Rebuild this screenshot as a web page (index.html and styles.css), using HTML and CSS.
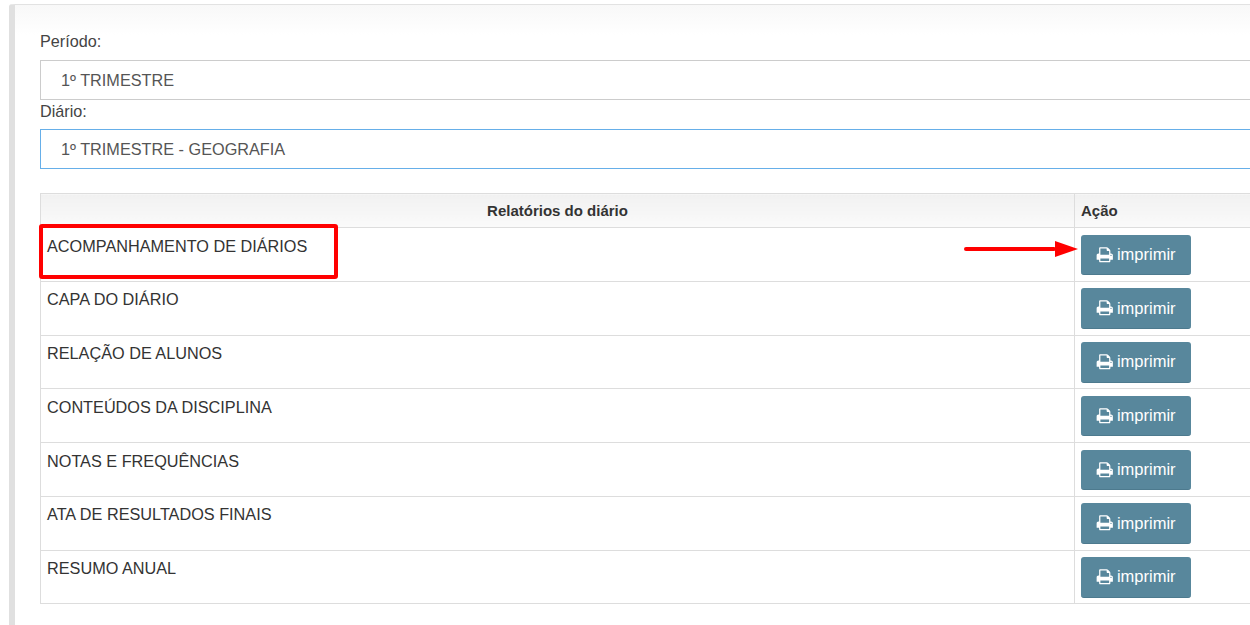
FILE: index.html
```html
<!DOCTYPE html>
<html lang="pt-BR">
<head>
<meta charset="utf-8">
<title>Relatórios do diário</title>
<link rel="stylesheet" href="styles.css">
</head>
<body>
<svg width="0" height="0" class="defs"><defs>
<symbol id="print" viewBox="0 0 1792 1792"><path fill="currentColor" d="M448 1536h896v-256h-896v256zm0-640h896v-384h-160q-40 0-68-28t-28-68v-160h-640v640zm1152 64q0-26-19-45t-45-19-45 19-19 45 19 45 45 19 45-19 19-45zm128 0v416q0 13-9.5 22.5t-22.5 9.5h-224v160q0 40-28 68t-68 28h-960q-40 0-68-28t-28-68v-160h-224q-13 0-22.5-9.5t-9.5-22.5v-416q0-79 56.5-135.5t135.5-56.5h64v-544q0-40 28-68t68-28h672q40 0 88 20t76 48l152 152q28 28 48 76t20 88v256h64q79 0 135.5 56.5t56.5 135.5z"/></symbol>
</defs></svg>
<main class="panel">
  <label class="label">Período:</label>
  <div class="field">1º TRIMESTRE</div>
  <label class="label label-second">Diário:</label>
  <div class="field field-focus">1º TRIMESTRE - GEOGRAFIA</div>
  <table class="report">
    <thead>
      <tr><th class="col-name">Relatórios do diário</th><th class="col-action">Ação</th></tr>
    </thead>
    <tbody>
      <tr><td>ACOMPANHAMENTO DE DIÁRIOS</td><td class="cell-action"><button class="btn"><svg class="ico"><use href="#print"/></svg>imprimir</button></td></tr>
      <tr><td>CAPA DO DIÁRIO</td><td class="cell-action"><button class="btn"><svg class="ico"><use href="#print"/></svg>imprimir</button></td></tr>
      <tr><td>RELAÇÃO DE ALUNOS</td><td class="cell-action"><button class="btn"><svg class="ico"><use href="#print"/></svg>imprimir</button></td></tr>
      <tr><td>CONTEÚDOS DA DISCIPLINA</td><td class="cell-action"><button class="btn"><svg class="ico"><use href="#print"/></svg>imprimir</button></td></tr>
      <tr><td>NOTAS E FREQUÊNCIAS</td><td class="cell-action"><button class="btn"><svg class="ico"><use href="#print"/></svg>imprimir</button></td></tr>
      <tr><td>ATA DE RESULTADOS FINAIS</td><td class="cell-action"><button class="btn"><svg class="ico"><use href="#print"/></svg>imprimir</button></td></tr>
      <tr><td>RESUMO ANUAL</td><td class="cell-action"><button class="btn"><svg class="ico"><use href="#print"/></svg>imprimir</button></td></tr>
    </tbody>
  </table>
</main>
<div class="mark-box"></div>
<svg class="mark-arrow" width="116" height="16" viewBox="0 0 116 16"><rect x="0" y="6" width="92" height="4" rx="2" fill="#f00"/><path d="M91 0 L114 8 L91 16 Z" fill="#f00"/></svg>
</body>
</html>
```
FILE: styles.css
```css
html, body {
  margin: 0;
  height: 100%;
  overflow: hidden;
  background: #fff;
}
body {
  position: relative;
  width: 1250px;
  height: 625px;
  font-family: "Liberation Sans", Arial, sans-serif;
  color: #333;
}
.defs { position: absolute; }
.panel {
  box-sizing: border-box;
  width: 1400px;
  height: 640px;
  margin: 4px 0 0 9px;
  padding: 25px 0 0 25px;
  border-top: 1px solid #e2e2e2;
  border-left: 6px solid #e0e0e0;
  border-top-left-radius: 3px;
  background: linear-gradient(#f8f8f8, #fff 30px);
}
.label {
  display: block;
  height: 22px;
  margin-bottom: 8px;
  font-size: 16.2px;
  line-height: 22px;
  color: #444;
}
.label-second { margin-bottom: 7px; }
.field {
  box-sizing: border-box;
  width: 1300px;
  height: 40px;
  padding-left: 20px;
  border: 1px solid #ccc;
  font-size: 16.25px;
  line-height: 38px;
  color: #555;
  background: #fff;
}
.field-focus { border-color: #66afe9; }
.report {
  width: 1300px;
  margin-top: 24px;
  border-collapse: collapse;
  table-layout: fixed;
  font-size: 16.25px;
  background: #fff;
}
.report th, .report td {
  border: 1px solid #ddd;
  vertical-align: top;
  text-align: left;
}
.report th {
  height: 34px;
  padding: 0 6px;
  box-sizing: border-box;
  font-size: 15px;
  line-height: 33px;
  background: linear-gradient(#f1f1f1, #fafafa);
}
.report .col-name { text-align: center; width: 1034px; }
.report td {
  height: 53.75px;
  box-sizing: border-box;
  padding: 6.7px 6px 0;
  line-height: 22px;
  color: #333;
}
.btn {
  display: flex;
  align-items: center;
  justify-content: center;
  gap: 3px;
  box-sizing: border-box;
  width: 110px;
  height: 40.4px;
  padding: 0;
  border: 0;
  border-bottom: 1px solid #4d7a8e;
  border-radius: 3px;
  background: #58879c;
  color: #fff;
  font-family: inherit;
  font-size: 16.5px;
}
.ico { width: 17.5px; height: 17.5px; }
.mark-box {
  position: absolute;
  left: 39px;
  top: 224px;
  width: 291px;
  height: 47px;
  border: 4px solid #f00;
  border-radius: 3px;
}
.mark-arrow {
  position: absolute;
  left: 964px;
  top: 241px;
}
```
